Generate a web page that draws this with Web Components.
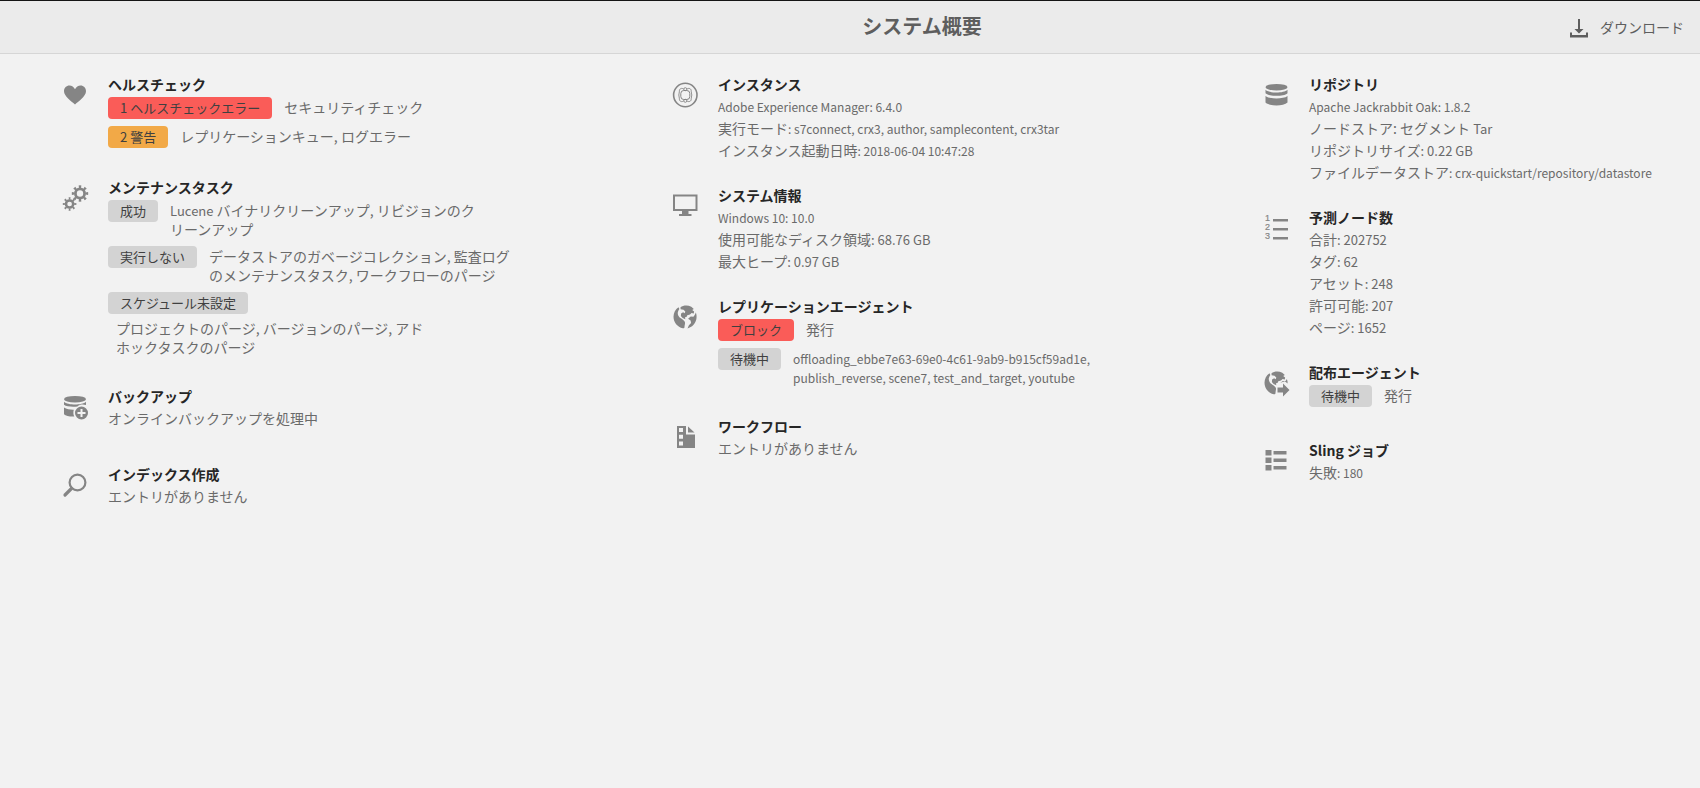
<!DOCTYPE html>
<html lang="ja">
<head>
<meta charset="utf-8">
<title>システム概要</title>
<meta name="viewport" content="width=device-width, initial-scale=1">
<style>
  html { background: #f2f2f2; }
  body {
    margin: 0;
    color: #6a6a6a;
    font: 14px/22px "Noto Sans CJK JP", "Noto Sans", sans-serif;
  }
  [lang="en"] { font-size: 12px; line-height: 1; }
  .value { font-size: 13px; line-height: 1; }
</style>
</head>
<body>
<overview-page>
  <overview-header slot="header">システム概要<span slot="action">ダウンロード</span></overview-header>

  <overview-column>
    <overview-card icon="heart" heading="ヘルスチェック">
      <status-list>
        <status-row level="error" label="1 ヘルスチェックエラー">セキュリティチェック</status-row>
        <status-row level="warning" label="2 警告">レプリケーションキュー, ログエラー</status-row>
      </status-list>
    </overview-card>
    <overview-card icon="gears" heading="メンテナンスタスク">
      <status-list>
        <status-row label="成功"><span class="value">Lucene</span> バイナリクリーンアップ, リビジョンのクリーンアップ</status-row>
        <status-row label="実行しない">データストアのガベージコレクション, 監査ログのメンテナンスタスク, ワークフローのパージ</status-row>
        <status-row label="スケジュール未設定">プロジェクトのパージ, バージョンのパージ, アドホックタスクのパージ</status-row>
      </status-list>
    </overview-card>
    <overview-card icon="backup" heading="バックアップ">
      <info-line>オンラインバックアップを処理中</info-line>
    </overview-card>
    <overview-card icon="search" heading="インデックス作成">
      <info-line>エントリがありません</info-line>
    </overview-card>
  </overview-column>

  <overview-column>
    <overview-card icon="instance" heading="インスタンス">
      <info-line><span lang="en">Adobe Experience Manager: 6.4.0</span></info-line>
      <info-line>実行モード<span lang="en">: s7connect, crx3, author, samplecontent, crx3tar</span></info-line>
      <info-line>インスタンス起動日時<span lang="en">: 2018-06-04 10:47:28</span></info-line>
    </overview-card>
    <overview-card icon="monitor" heading="システム情報">
      <info-line><span lang="en">Windows 10: 10.0</span></info-line>
      <info-line>使用可能なディスク領域<span class="value">: 68.76 GB</span></info-line>
      <info-line>最大ヒープ<span class="value">: 0.97 GB</span></info-line>
    </overview-card>
    <overview-card icon="globe" heading="レプリケーションエージェント">
      <status-list>
        <status-row level="error" label="ブロック">発行</status-row>
        <status-row label="待機中"><span lang="en">offloading_ebbe7e63-69e0-4c61-9ab9-b915cf59ad1e, publish_reverse, scene7, test_and_target, youtube</span></status-row>
      </status-list>
    </overview-card>
    <overview-card icon="workflow" heading="ワークフロー">
      <info-line>エントリがありません</info-line>
    </overview-card>
  </overview-column>

  <overview-column>
    <overview-card icon="database" heading="リポジトリ">
      <info-line><span lang="en">Apache Jackrabbit Oak: 1.8.2</span></info-line>
      <info-line>ノードストア: セグメント <span class="value">Tar</span></info-line>
      <info-line>リポジトリサイズ<span class="value">: 0.22 GB</span></info-line>
      <info-line>ファイルデータストア<span lang="en">: crx-quickstart/repository/datastore</span></info-line>
    </overview-card>
    <overview-card icon="numbered" heading="予測ノード数">
      <info-line>合計<span class="value">: 202752</span></info-line>
      <info-line>タグ<span class="value">: 62</span></info-line>
      <info-line>アセット<span class="value">: 248</span></info-line>
      <info-line>許可可能<span class="value">: 207</span></info-line>
      <info-line>ページ<span class="value">: 1652</span></info-line>
    </overview-card>
    <overview-card icon="distribute" heading="配布エージェント">
      <status-list>
        <status-row label="待機中">発行</status-row>
      </status-list>
    </overview-card>
    <overview-card icon="list" heading="Sling ジョブ">
      <info-line>失敗<span lang="en">: 180</span></info-line>
    </overview-card>
  </overview-column>
</overview-page>

<script>
  const globeLand = `
    <path d="M5.500 2.300C2.400 4.400.5 7.900.5 11.800c0 5.600 4 10.300 9.300 11.500 1.200.2 1.700-.5 1.700-1.600 0-1.500.7-2.600.5-4.200-.2-1.500-1.500-2.300-2.700-3.300-1.200-1-2.800-1.500-3.600-3-.8-1.400-1.200-2.800-.8-4.300.3-1.200 1-2 1.500-2.900z"/>
    <path d="M7.500 2.200C10 .5 14.500-.2 18.300 1.800l2.500 2.300-1.600.8 1.900 1.600-.3 1.900-2.200-.4-1.600 1.500-2.700.7-.8 1.900-1.500.2.3 2-2.700-1.200-1.700-2.200.2-2.400 2-1.300 1.600 1 .6-1.700-1.800-1.700-2.900-.6z"/>`;

  const icons = {
    heart: `<path d="M12 21.500C9 18.600 1 13.400 1 8.200 1 4.800 3.500 2.500 6.400 2.500c2.400 0 4.500 1.400 5.600 3.700 1.100-2.300 3.200-3.700 5.600-3.700C20.500 2.500 23 4.800 23 8.200c0 5.200-8 10.400-11 13.300z"/>`,
    gears: `<g fill="none" stroke="currentColor">
      <circle cx="17" cy="7.500" r="4.600" stroke-width="2.800"/>
      <circle cx="17" cy="7.500" r="6.900" stroke-width="2.600" pathLength="16" stroke-dasharray=".9 1.100" stroke-dashoffset=".45"/>
      <circle cx="6.600" cy="18" r="3.600" stroke-width="2.500"/>
      <circle cx="6.600" cy="18" r="5.600" stroke-width="2.400" pathLength="16" stroke-dasharray=".8 1.200" stroke-dashoffset=".4"/></g>`,
    backup: `<ellipse cx="12" cy="4.200" rx="11" ry="3.300"/>
      <path d="M1 6.800c2 2 6.500 2.700 11 2.700s9-.7 11-2.700v3.300c-2.600-.9-6.200-.9-8.600 1.400-4.800.6-10.900.2-13.400-1.700z"/>
      <path d="M1 12.500c2.500 1.700 6.500 2.300 9.800 2.200-.7 2.300-.6 4.600.5 6.800C7 21.700 2.600 21 1 19.200z"/>
      <path fill-rule="evenodd" d="M18.500 11.500a6.500 6.500 0 1 1 0 13 6.500 6.500 0 0 1 0-13zM17.500 14v3h-3v2h3v3h2v-3h3v-2h-3v-3z"/>`,
    search: `<g fill="none" stroke="currentColor"><circle cx="14.500" cy="9.500" r="7.900" stroke-width="2.200"/><path d="M8.500 15.500l-6.500 6.500" stroke-width="3.200" stroke-linecap="round"/></g>`,
    instance: `<g fill="none" stroke="currentColor"><circle cx="12.300" cy="12" r="11.700" stroke-width="1.600"/>
      <rect x="7.800" y="7.500" width="9" height="9" rx="3" stroke-width="1"/>
      <g stroke-width=".9"><circle cx="12.300" cy="6.200" r="1.500"/><circle cx="12.300" cy="17.800" r="1.500"/><path d="M10.800 6.200C9 4.600 6.200 5.400 6.400 8.200c.1 1.400-.6 2.300-.6 3.800s.7 2.400.6 3.800c-.2 2.800 2.600 3.600 4.400 2M13.800 6.200c1.800-1.600 4.600-.8 4.400 2-.1 1.400.6 2.300.6 3.800s-.7 2.400-.6 3.800c.2 2.800-2.600 3.600-4.400 2"/></g></g>`,
    monitor: `<path fill-rule="evenodd" d="M0 .5h24.500v16.500H0zM2 2.500v12.500h20.500V2.500zM9 17h6.500v3h3v2H6v-2h3z"/>`,
    globe: globeLand + `<path d="M22.900 7.500c1.500 4.300.6 9.300-2.600 12.600-1.500 1.600-3.600 2.900-5.800 3.300l1.400-3.200 2.200-2.300-.5-2.300-2.500-1.800 2.600-2.300 2.700.2 1.300-1.800z"/>`,
    workflow: `<path fill-rule="evenodd" d="M4 1h9v8.500h9V23H4zM6 3v4h4V3zM6 9.700v4h4v-4zM6 16.500v4h4v-4z"/><path d="M15 1.500l6.500 6H15z"/>`,
    database: `<ellipse cx="12.500" cy="4.200" rx="11" ry="3.300"/>
      <path d="M1.500 6.800c2 2 6.500 2.700 11 2.700s9-.7 11-2.700v3.500c-2 2-6.500 2.500-11 2.500s-9-.5-11-2.500z"/>
      <path d="M1.500 13c2 1.800 6.500 2.400 11 2.400s9-.6 11-2.400v6.500c-2 2-6.500 2.900-11 2.900s-9-.9-11-2.900z"/>`,
    numbered: `<path d="M9 3h15v2.500H9zM9 12h15v2.500H9zM9 21h15v2.500H9z"/>
      <g font-size="9" font-family="Liberation Sans, sans-serif" stroke="currentColor" stroke-width=".2"><text x="1" y="5">1</text><text x="1" y="14">2</text><text x="1" y="23">3</text></g>`,
    distribute: globeLand + `<path d="M22.900 8c.6 1.600.8 3 .7 4.600l-2.800-2.400-2 .9-2.500.6 2.600-1.800 2.700.2z"/><path d="M13.500 16.500h5.500v-4l6.500 6.500-6.500 6.500v-4h-5.500z"/>`,
    list: `<path d="M1.500 1h6v5.500h-6zM9.500 2h13v3.500h-13zM1.500 8.500h6V14h-6zM9.500 9.500h13V13h-13zM1.500 16h6v5.500h-6zM9.500 17h13v3.500h-13z"/>`
  };

  function define(name, html, setup) {
    const template = document.createElement('template');
    template.innerHTML = html;
    customElements.define(name, class extends HTMLElement {
      constructor() {
        super();
        this.attachShadow({ mode: 'open' }).append(template.content.cloneNode(true));
      }
      connectedCallback() {
        if (setup) setup(this, this.shadowRoot);
      }
    });
  }

  define('overview-page', `
    <style>
      :host { display: block; }
      main {
        display: grid;
        grid-template-columns: 610fr 591fr 412fr;
        padding: 19px 24px 24px 63px;
      }
    </style>
    <slot name="header"></slot>
    <main><slot></slot></main>`);

  define('overview-header', `
    <style>
      :host { display: block; }
      header {
        display: grid;
        grid-template-columns: 290px 1fr auto;
        align-items: center;
        height: 52px;
        border-top: 1px solid #141414;
        border-bottom: 1px solid #d6d6d6;
        background: #ebebeb;
      }
      h1 {
        grid-column: 2;
        margin: 0;
        padding-bottom: 2px;
        color: #5e5e5e;
        font-size: 20px;
        line-height: 28px;
        font-weight: 700;
        text-align: center;
      }
      button {
        display: flex;
        align-items: center;
        gap: 10px;
        padding: 0 16px;
        border: 0;
        background: none;
        color: #5e5e5e;
        font: inherit;
        cursor: pointer;
      }
      svg { display: block; width: 20px; height: 20px; margin-top: 4px; fill: currentColor; }
    </style>
    <header>
      <h1><slot></slot></h1>
      <button type="button">
        <svg viewBox="0 0 20 20" aria-hidden="true"><path d="M8 0h2v10h3.500L9 14.500 4.500 10H8zM0 13.500h2V16h14v-2.500h2v5H0z"/></svg>
        <slot name="action"></slot>
      </button>
    </header>`);

  define('overview-column', `
    <style>
      :host { display: flex; flex-direction: column; gap: 23px; min-width: 0; }
    </style>
    <slot></slot>`);

  define('overview-card', `
    <style>
      :host { display: block; }
      section { display: flex; gap: 20px; min-height: 55px; }
      svg {
        flex: none;
        width: 25px;
        height: 25px;
        margin-top: 10px;
        overflow: visible;
        color: #858585;
        fill: currentColor;
      }
      .body { flex: 1; min-width: 0; }
      h2 { margin: 0; color: #262626; font-size: 14px; line-height: 22px; font-weight: 700; }
    </style>
    <section>
      <svg viewBox="0 0 25 25" aria-hidden="true"></svg>
      <div class="body"><h2></h2><slot></slot></div>
    </section>`, (host, root) => {
      root.querySelector('svg').innerHTML = icons[host.getAttribute('icon')];
      root.querySelector('h2').textContent = host.getAttribute('heading');
    });

  define('info-line', `
    <style>:host { display: block; line-height: 22px; }</style>
    <slot></slot>`);

  define('status-list', `
    <style>
      :host { display: flex; flex-direction: column; gap: 7px; max-width: 440px; padding: 2px 0 5px; }
    </style>
    <slot></slot>`);

  define('status-row', `
    <style>
      :host { display: flex; flex-wrap: wrap; align-items: flex-start; row-gap: 4px; }
      .badge {
        flex: none;
        margin-right: 4px;
        padding: 0 12px;
        border-radius: 4px;
        background: #d3d3d3;
        color: #404040;
        font-size: 13px;
        line-height: 22px;
      }
      :host([level="error"]) .badge { background: #fa5c58; }
      :host([level="warning"]) .badge { background: #f2a947; }
      .text { max-width: 312px; margin-left: 8px; padding-top: 1px; line-height: 19px; }
    </style>
    <span class="badge"></span>
    <div class="text"><slot></slot></div>`, (host, root) => {
      root.querySelector('.badge').textContent = host.getAttribute('label');
    });
</script>
</body>
</html>
